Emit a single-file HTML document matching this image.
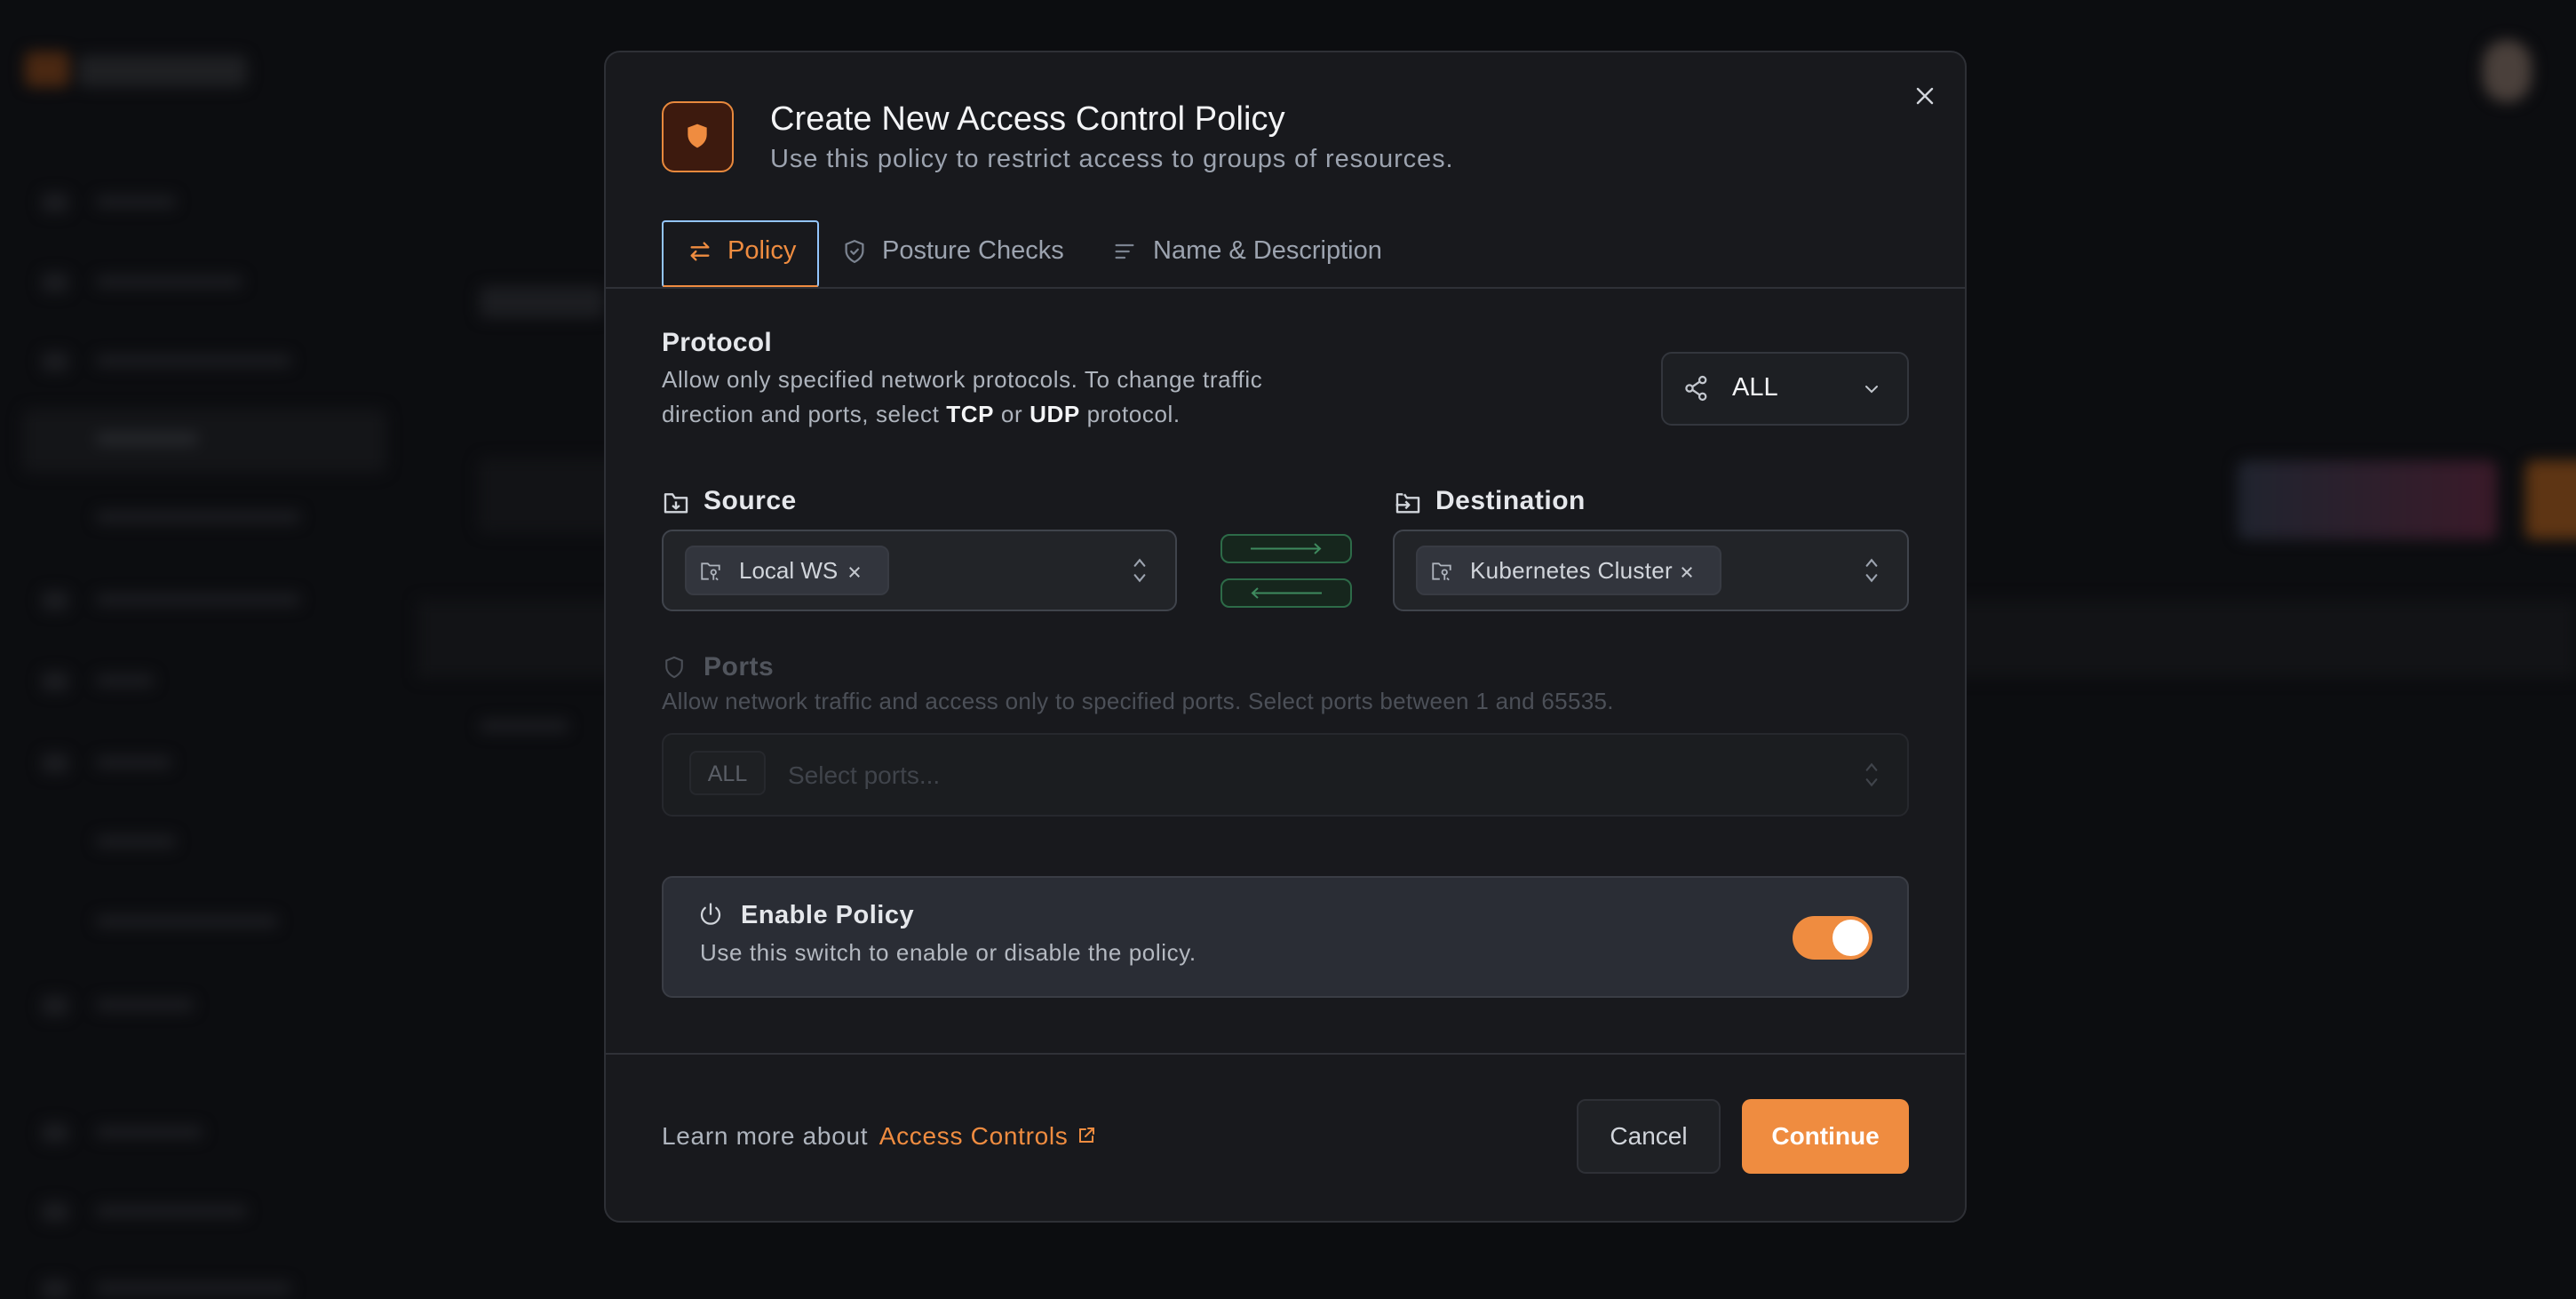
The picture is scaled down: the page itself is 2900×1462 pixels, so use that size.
<!DOCTYPE html>
<html><head><meta charset="utf-8">
<style>
*{box-sizing:border-box;margin:0;padding:0}
body{width:2900px;height:1460px;background:#0c0d10;font-family:"Liberation Sans",sans-serif;position:relative;overflow:hidden;color:#e5e7eb}
.bg{position:absolute;inset:0;filter:blur(8px)}
.bg div{position:absolute}
.t{background:#1c1d21;height:14px;border-radius:6px}
.ic{background:#1c1d21;width:30px;height:22px;border-radius:6px}
.ab{position:absolute}
.modal{position:absolute;left:680px;top:57px;width:1534px;height:1319px;background:#18191d;border:2px solid #2e3036;border-radius:18px}
svg{position:absolute}
.box{position:absolute;background:#222428;border:2px solid #40444c;border-radius:12px}
.chip{position:absolute;background:#32353d;border:2px solid #383b43;border-radius:10px;color:#d1d5db;font-size:25px}
</style></head><body>
<div class="bg">
 <div style="left:28px;top:58px;width:50px;height:40px;background:#4a2812;border-radius:8px"></div>
 <div style="left:88px;top:62px;width:190px;height:36px;background:#1f2023;border-radius:8px"></div>
 <div style="left:25px;top:460px;width:410px;height:72px;background:#141518;border-radius:10px"></div>
 <div class="ic" style="left:47px;top:217px"></div><div class="t" style="left:108px;top:220px;width:90px"></div>
 <div class="ic" style="left:47px;top:307px"></div><div class="t" style="left:108px;top:310px;width:165px"></div>
 <div class="ic" style="left:47px;top:396px"></div><div class="t" style="left:108px;top:399px;width:220px"></div>
 <div class="t" style="left:108px;top:487px;width:115px;background:#26282c"></div>
 <div class="t" style="left:108px;top:575px;width:230px"></div>
 <div class="ic" style="left:47px;top:665px"></div><div class="t" style="left:108px;top:668px;width:230px"></div>
 <div class="ic" style="left:47px;top:756px"></div><div class="t" style="left:108px;top:759px;width:65px"></div>
 <div class="ic" style="left:47px;top:848px"></div><div class="t" style="left:108px;top:851px;width:85px"></div>
 <div class="t" style="left:108px;top:940px;width:90px"></div>
 <div class="t" style="left:108px;top:1030px;width:205px"></div>
 <div class="ic" style="left:47px;top:1121px"></div><div class="t" style="left:108px;top:1124px;width:110px"></div>
 <div class="ic" style="left:47px;top:1264px"></div><div class="t" style="left:108px;top:1267px;width:120px"></div>
 <div class="ic" style="left:47px;top:1353px"></div><div class="t" style="left:108px;top:1356px;width:170px"></div>
 <div class="ic" style="left:47px;top:1440px"></div><div class="t" style="left:108px;top:1443px;width:220px"></div>
 <div class="t" style="left:540px;top:322px;width:140px;height:36px"></div>
 <div style="left:538px;top:515px;width:200px;height:85px;background:#121316;border-radius:10px"></div>
 <div style="left:470px;top:675px;width:2430px;height:88px;background:#121316"></div>
 <div style="left:2519px;top:518px;width:292px;height:89px;background:linear-gradient(90deg,#20242f,#3a1a29);border-radius:10px"></div>
 <div style="left:2843px;top:518px;width:80px;height:89px;background:#5e3514;border-radius:10px"></div>
 <div style="left:2795px;top:45px;width:55px;height:70px;background:#4a403b;border-radius:28px"></div>
 <div class="t" style="left:540px;top:810px;width:100px"></div>
</div>

<div class="modal">
 <svg style="left:1473px;top:37px" width="24" height="24" viewBox="0 0 24 24" fill="none" stroke="#d1d5db" stroke-width="2.4" stroke-linecap="round"><path d="M4 4L20 20M20 4L4 20"/></svg>
 <div class="ab" style="left:63px;top:55px;width:81px;height:80px;background:#3d1a0e;border:2px solid #e8893d;border-radius:14px"></div>
 <svg style="left:87px;top:78px" width="32" height="32" viewBox="0 0 24 24"><path d="M12 2L20 5V11C20 16 16.5 20 12 22C7.5 20 4 16 4 11V5Z" fill="#ef8c40"/></svg>
 <div class="ab" style="left:185px;top:54px;font-size:38px;font-weight:500;color:#f3f4f6;letter-spacing:0.1px">Create New Access Control Policy</div>
 <div class="ab" style="left:185px;top:104px;font-size:29px;color:#9ca3af;letter-spacing:0.9px">Use this policy to restrict access to groups of resources.</div>

 <div class="ab" style="left:63px;top:189px;width:177px;height:76px;border:2px solid #93c5fd;border-bottom:3px solid #ef8c40;border-radius:4px"></div>
 <svg style="left:92px;top:210px" width="28" height="28" viewBox="0 0 24 24" fill="none" stroke="#ef8c40" stroke-width="2" stroke-linecap="round" stroke-linejoin="round"><path d="M4 8H20M16 4L20 8M20 16H4M8 12L4 16L8 20"/></svg>
 <div class="ab" style="left:137px;top:207px;font-size:29px;color:#ef8c40">Policy</div>
 <svg style="left:265px;top:209px" width="30" height="30" viewBox="0 0 24 24" fill="none" stroke="#7b8390" stroke-width="1.8" stroke-linecap="round" stroke-linejoin="round"><path d="M12 2.5L19.5 5.5V11.5C19.5 16 16 19.5 12 21.5C8 19.5 4.5 16 4.5 11.5V5.5Z"/><path d="M9 12L11.2 14.2L15 10.2"/></svg>
 <div class="ab" style="left:311px;top:207px;font-size:29px;color:#9ca3af">Posture Checks</div>
 <svg style="left:570px;top:210px" width="28" height="28" viewBox="0 0 24 24" fill="none" stroke="#7b8390" stroke-width="2" stroke-linecap="round"><path d="M4 6H20M4 12H16M4 18H12"/></svg>
 <div class="ab" style="left:616px;top:207px;font-size:29px;color:#9ca3af">Name &amp; Description</div>
 <div class="ab" style="left:0;top:264px;width:1530px;height:2px;background:#2f3137"></div>

 <div class="ab" style="left:63px;top:310px;font-size:30px;font-weight:bold;color:#e5e7eb;letter-spacing:0.3px">Protocol</div>
 <div class="ab" style="left:63px;top:349px;font-size:26px;line-height:39px;color:#aeb4bd;letter-spacing:0.6px">Allow only specified network protocols. To change traffic<br>direction and ports, select <b style="color:#f3f4f6">TCP</b> or <b style="color:#f3f4f6">UDP</b> protocol.</div>
 <div class="box" style="left:1188px;top:337px;width:279px;height:83px;background:#1d1f23;border-color:#33363d"></div>
 <svg style="left:1212px;top:362px" width="32" height="32" viewBox="0 0 24 24" fill="none" stroke="#c3c7ce" stroke-width="1.7"><circle cx="17" cy="5" r="2.7"/><circle cx="6" cy="12" r="2.7"/><circle cx="17" cy="19" r="2.7"/><path d="M8.4 10.7L14.6 6.4M8.4 13.3L14.6 17.6"/></svg>
 <div class="ab" style="left:1268px;top:361px;font-size:29px;color:#f3f4f6;font-weight:500">ALL</div>
 <svg style="left:1413px;top:367px" width="24" height="24" viewBox="0 0 24 24" fill="none" stroke="#c3c7ce" stroke-width="2" stroke-linecap="round"><path d="M6 9L12 15L18 9"/></svg>

 <svg style="left:63px;top:492px" width="32" height="32" viewBox="0 0 24 24" fill="none" stroke="#d1d5db" stroke-width="1.8" stroke-linejoin="round"><path d="M3 5V19H21V7H11L9 4H3Z"/><path d="M12 10V16M9 13.5L12 16L15 13.5"/></svg>
 <div class="ab" style="left:110px;top:488px;font-size:30px;font-weight:bold;color:#e5e7eb;letter-spacing:0.5px">Source</div>
 <div class="box" style="left:63px;top:537px;width:580px;height:92px"></div>
 <div class="chip" style="left:89px;top:555px;width:230px;height:56px"></div>
 <svg style="left:105px;top:571px" width="26" height="26" viewBox="0 0 24 24" fill="none" stroke="#aeb4bd" stroke-width="1.7"><path d="M10 20H3V4H9L11 6H21V11"/><circle cx="15" cy="13" r="2.5"/><path d="M15 15.5V21M17.5 19L19.5 21"/></svg>
 <div class="ab" style="left:150px;top:568px;font-size:26px;color:#d1d5db">Local WS</div>
 <svg style="left:271px;top:576px" width="18" height="18" viewBox="0 0 24 24" stroke="#c3c7ce" stroke-width="2.6"><path d="M5 5L19 19M19 5L5 19"/></svg>
 <svg style="left:588px;top:566px" width="26" height="34" viewBox="0 0 24 32" fill="none" stroke="#9ca3af" stroke-width="2" stroke-linecap="round"><path d="M7 11L12 5L17 11M7 21L12 27L17 21"/></svg>

 <div class="ab" style="left:692px;top:542px;width:148px;height:33px;background:#16261d;border:2px solid #2d6b48;border-radius:10px"></div>
 <svg style="left:692px;top:542px" width="148" height="33"><path d="M34 16.5H112M106 11L112 16.5L106 22" stroke="#3e8a5e" stroke-width="2" fill="none"/></svg>
 <div class="ab" style="left:692px;top:592px;width:148px;height:33px;background:#16261d;border:2px solid #2d6b48;border-radius:10px"></div>
 <svg style="left:692px;top:592px" width="148" height="33"><path d="M114 16.5H36M42 11L36 16.5L42 22" stroke="#3e8a5e" stroke-width="2" fill="none"/></svg>

 <svg style="left:887px;top:492px" width="32" height="32" viewBox="0 0 24 24" fill="none" stroke="#d1d5db" stroke-width="1.8" stroke-linejoin="round"><path d="M7 5V4H3V19H21V7H11L9 4"/><path d="M2 13H13M10 10L13 13L10 16"/></svg>
 <div class="ab" style="left:934px;top:488px;font-size:30px;font-weight:bold;color:#e5e7eb;letter-spacing:0.5px">Destination</div>
 <div class="box" style="left:886px;top:537px;width:581px;height:92px"></div>
 <div class="chip" style="left:912px;top:555px;width:344px;height:56px"></div>
 <svg style="left:928px;top:571px" width="26" height="26" viewBox="0 0 24 24" fill="none" stroke="#aeb4bd" stroke-width="1.7"><path d="M10 20H3V4H9L11 6H21V11"/><circle cx="15" cy="13" r="2.5"/><path d="M15 15.5V21M17.5 19L19.5 21"/></svg>
 <div class="ab" style="left:973px;top:568px;font-size:26px;color:#d1d5db;letter-spacing:0.3px">Kubernetes Cluster</div>
 <svg style="left:1208px;top:576px" width="18" height="18" viewBox="0 0 24 24" stroke="#c3c7ce" stroke-width="2.6"><path d="M5 5L19 19M19 5L5 19"/></svg>
 <svg style="left:1412px;top:566px" width="26" height="34" viewBox="0 0 24 32" fill="none" stroke="#9ca3af" stroke-width="2" stroke-linecap="round"><path d="M7 11L12 5L17 11M7 21L12 27L17 21"/></svg>

 <svg style="left:63px;top:677px" width="28" height="30" viewBox="0 0 24 24" fill="none" stroke="#4b4f57" stroke-width="1.8"><path d="M12 2.5L19.5 5.5V11.5C19.5 16 16 19.5 12 21.5C8 19.5 4.5 16 4.5 11.5V5.5Z"/></svg>
 <div class="ab" style="left:110px;top:675px;font-size:30px;font-weight:bold;color:#51555d;letter-spacing:0.5px">Ports</div>
 <div class="ab" style="left:63px;top:715px;font-size:26px;color:#4c5058;letter-spacing:0.3px">Allow network traffic and access only to specified ports. Select ports between 1 and 65535.</div>
 <div class="box" style="left:63px;top:766px;width:1404px;height:94px;background:#1b1d20;border-color:#26282d"></div>
 <div class="ab" style="left:94px;top:786px;width:86px;height:50px;background:#1e2023;border:2px solid #26282d;border-radius:8px;font-size:25px;color:#5a5e66;text-align:center;line-height:48px">ALL</div>
 <div class="ab" style="left:205px;top:798px;font-size:28px;color:#40444b">Select ports...</div>
 <svg style="left:1412px;top:796px" width="26" height="34" viewBox="0 0 24 32" fill="none" stroke="#40444b" stroke-width="2" stroke-linecap="round"><path d="M7 11L12 5L17 11M7 21L12 27L17 21"/></svg>

 <div class="box" style="left:63px;top:927px;width:1404px;height:137px;background:#2a2d35;border-color:#3a3d45"></div>
 <svg style="left:103px;top:955px" width="30" height="32" viewBox="0 0 24 24" fill="none" stroke="#d1d5db" stroke-width="1.8" stroke-linecap="round"><path d="M12 2V11"/><path d="M7 5.5A8 8 0 1 0 17 5.5"/></svg>
 <div class="ab" style="left:152px;top:955px;font-size:29px;font-weight:bold;color:#e5e7eb;letter-spacing:0.5px">Enable Policy</div>
 <div class="ab" style="left:106px;top:998px;font-size:26px;color:#b4b9c1;letter-spacing:0.6px">Use this switch to enable or disable the policy.</div>
 <div class="ab" style="left:1336px;top:972px;width:90px;height:49px;background:#ef8c40;border-radius:25px"></div>
 <div class="ab" style="left:1381px;top:976px;width:41px;height:41px;background:#fff;border-radius:50%"></div>

 <div class="ab" style="left:0;top:1126px;width:1530px;height:2px;background:#2f3137"></div>
 <div class="ab" style="left:63px;top:1204px;font-size:28px;color:#aeb4bd;letter-spacing:0.7px;white-space:nowrap">Learn more about <span style="color:#ef8c40;margin-left:4px">Access Controls</span><svg style="position:relative;display:inline-block;margin-left:8px;vertical-align:-2px" width="24" height="24" viewBox="0 0 24 24" fill="none" stroke="#ef8c40" stroke-width="2" stroke-linecap="round"><path d="M11 5H5V19H19V13M14 4H20V10M20 4L11 13"/></svg></div>
 <div class="ab" style="left:1093px;top:1178px;width:162px;height:84px;background:#1f2125;border:2px solid #2e3036;border-radius:10px;font-size:28px;color:#d1d5db;text-align:center;line-height:80px">Cancel</div>
 <div class="ab" style="left:1279px;top:1178px;width:188px;height:84px;background:#ef8c40;border-radius:10px;font-size:28px;color:#fff;font-weight:bold;text-align:center;line-height:84px">Continue</div>
</div>
</body></html>
